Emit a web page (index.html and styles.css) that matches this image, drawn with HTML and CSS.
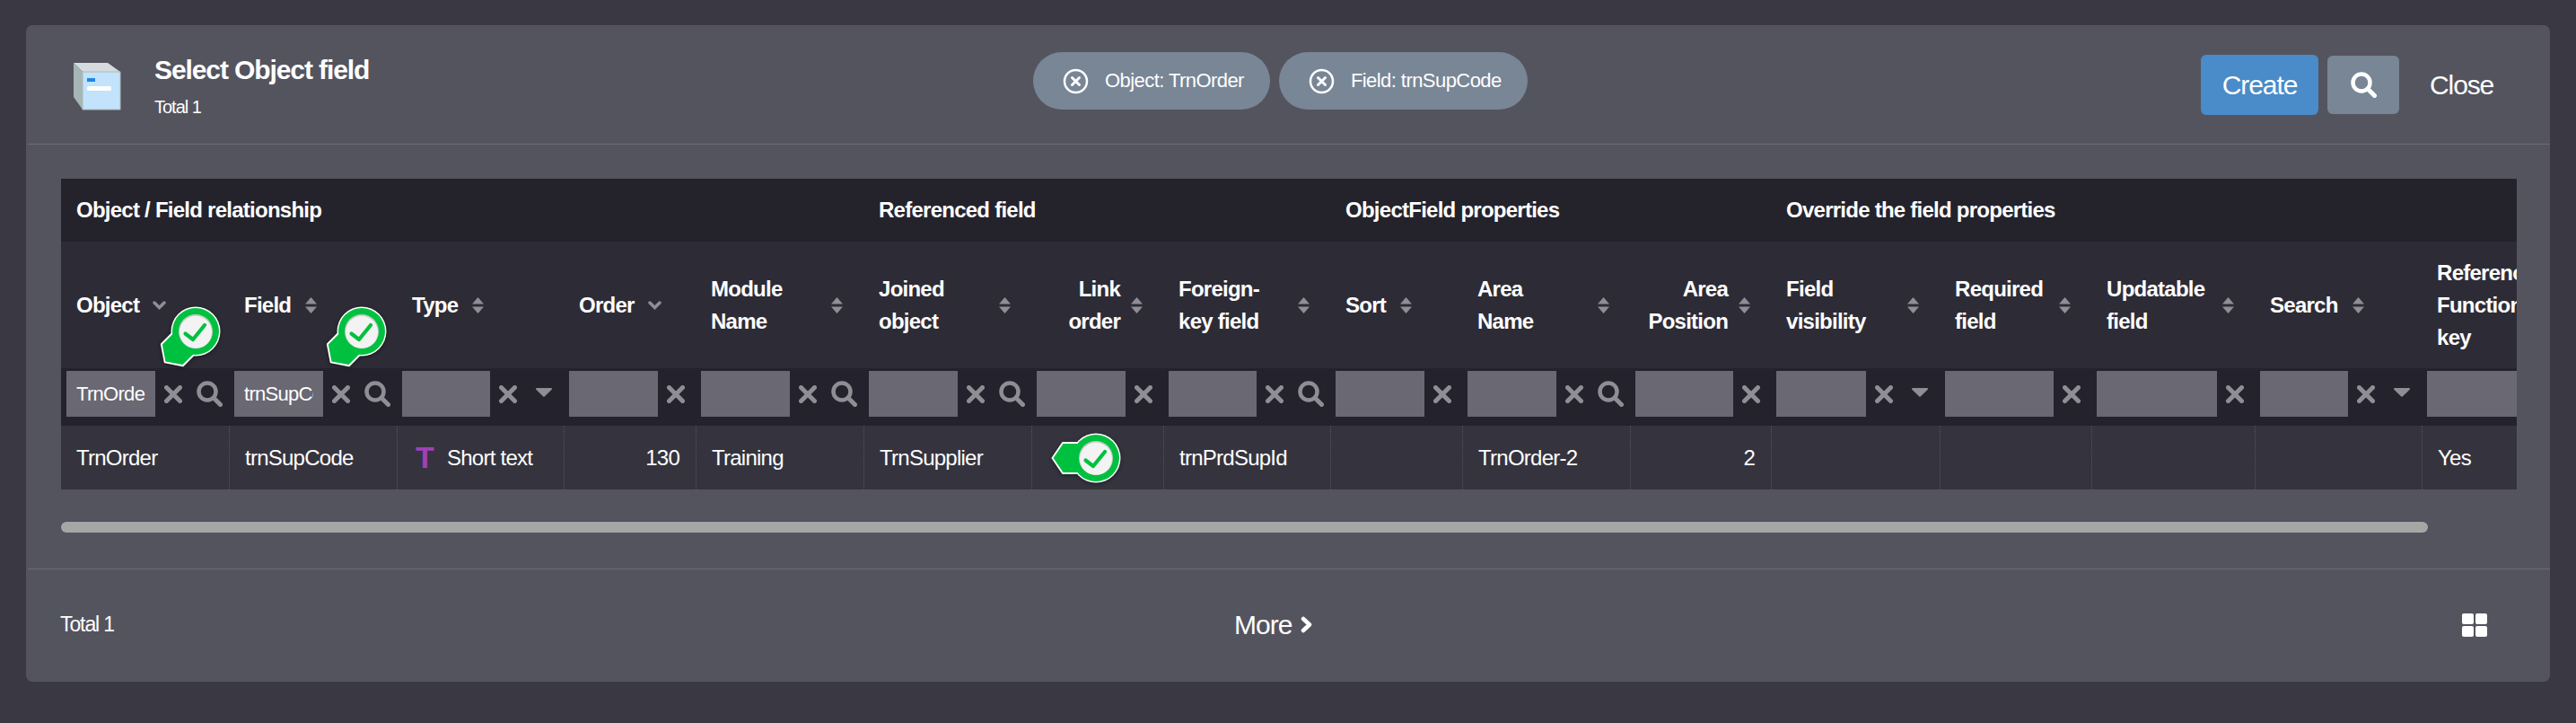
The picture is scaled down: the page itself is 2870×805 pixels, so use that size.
FILE: index.html
```html
<!DOCTYPE html>
<html lang="en">
<head>
<meta charset="UTF-8">
<title>Select Object field</title>
<link rel="stylesheet" href="styles.css">
</head>
<body>
<svg class="defs" width="0" height="0">
    <defs>
        <symbol id="i-sort" viewBox="0 0 13 18">
            <path d="M6.500 0 13 7.500H0z"/>
            <path d="M0 10.500H13L6.500 18z"/>
        </symbol>
        <symbol id="i-chev" viewBox="0 0 15 10">
            <path d="M2 2l5.500 5.500L13 2" fill="none" stroke="currentColor" stroke-width="3.500" stroke-linecap="round"/>
        </symbol>
        <symbol id="i-x" viewBox="0 0 20 20">
            <path d="M2.500 2.500l15 15M17.500 2.500l-15 15" fill="none" stroke="currentColor" stroke-width="5" stroke-linecap="round"/>
        </symbol>
        <symbol id="i-search" viewBox="0 0 29 29">
            <circle cx="12" cy="12" r="9.500" fill="none" stroke="currentColor" stroke-width="4.500"/>
            <path d="M19 19l7.500 7.500" fill="none" stroke="currentColor" stroke-width="5" stroke-linecap="round"/>
        </symbol>
        <symbol id="i-caret" viewBox="0 0 18 10">
            <path d="M1 0H17a1 1 0 0 1 .7 1.700L9.700 9.500a1 1 0 0 1-1.400 0L.3 1.700A1 1 0 0 1 1 0z"/>
        </symbol>
        <!-- marker pointing left, rotated for the header ones -->
        <g id="pin-body">
            <path d="M-48.500 0-37-17H-10V17H-37z" fill="#fff" stroke="#fff" stroke-width="2" stroke-linejoin="round"/>
            <circle r="27.500" fill="#fff"/>
            <path d="M-47.500 0-36.500-16H-10V16H-36.500z" fill="#00c13f"/>
            <circle r="26" fill="#00c13f"/>
        </g>
        <g id="pin-face">
            <circle r="19" fill="#c9c9c9"/>
            <circle r="18" cy="0.800" fill="#f3f3f3"/>
            <path d="M-11.500 2.500-3 9 10-7" fill="none" stroke="#00c13f" stroke-width="4.200" stroke-linecap="round" stroke-linejoin="round"/>
        </g>
    </defs>
</svg>

<div class="panel">
    <header class="panel-head">
        <div class="head-left">
            <svg class="cube" width="54" height="54" viewBox="0 0 54 54">
                <path d="M1 1H39L53 11H11z" fill="#d6dcde"/>
                <path d="M1 1 11 11V53L1 39z" fill="#a6b6b4"/>
                <path d="M11 11H53V53H11z" fill="#c3e2fb" stroke="#a9b9bc" stroke-width="1"/>
                <rect x="16" y="18" width="9" height="4" fill="#1e88e5"/>
                <rect x="16" y="27" width="27" height="5" rx="1.500" fill="#fff"/>
            </svg>
            <div class="head-text">
                <h1>Select Object field</h1>
                <div class="head-total">Total 1</div>
            </div>
        </div>
        <div class="chips">
            <span class="chip">
                <svg class="chip-x" width="29" height="29" viewBox="0 0 29 29">
                    <circle cx="14.500" cy="14.500" r="12.500" fill="none" stroke="#fff" stroke-width="2.500"/>
                    <path d="M10.500 10.500l8 8M18.500 10.500l-8 8" fill="none" stroke="#fff" stroke-width="3" stroke-linecap="round"/>
                </svg>
                Object: TrnOrder
            </span>
            <span class="chip">
                <svg class="chip-x" width="29" height="29" viewBox="0 0 29 29">
                    <circle cx="14.500" cy="14.500" r="12.500" fill="none" stroke="#fff" stroke-width="2.500"/>
                    <path d="M10.500 10.500l8 8M18.500 10.500l-8 8" fill="none" stroke="#fff" stroke-width="3" stroke-linecap="round"/>
                </svg>
                Field: trnSupCode
            </span>
        </div>
        <div class="head-actions">
            <button class="btn btn-create">Create</button>
            <button class="btn btn-search"><svg width="29" height="29"><use href="#i-search"/></svg></button>
            <button class="btn btn-close">Close</button>
        </div>
    </header>

    <div class="panel-body">
        <div class="table-wrap">
            <table class="grid">
                <colgroup>
                    <col class="w187"><col class="w187"><col class="w186"><col class="w147"><col class="w187">
                    <col class="w187"><col class="w147"><col class="w186">
                    <col class="w147"><col class="w187"><col class="w157">
                    <col class="w188"><col class="w169"><col class="w182"><col class="w186"><col class="w190">
                </colgroup>
                <thead>
                    <tr class="row-group">
                        <th colspan="5">Object / Field relationship</th>
                        <th colspan="3">Referenced field</th>
                        <th colspan="3">ObjectField properties</th>
                        <th colspan="5">Override the field properties</th>
                    </tr>
                    <tr class="row-head">
                        <th class="has-pin">
                            <div class="th-in"><span class="th-text">Object</span><svg class="chev" width="15" height="10"><use href="#i-chev"/></svg></div>
                            <svg class="pin pin-a" width="100" height="100" viewBox="-50 -50 100 100"><use href="#pin-body" transform="rotate(-45)"/><use href="#pin-face"/></svg>
                        </th>
                        <th class="has-pin">
                            <div class="th-in"><span class="th-text">Field</span><svg class="sort" width="13" height="18"><use href="#i-sort"/></svg></div>
                            <svg class="pin pin-b" width="100" height="100" viewBox="-50 -50 100 100"><use href="#pin-body" transform="rotate(-45)"/><use href="#pin-face"/></svg>
                        </th>
                        <th><div class="th-in"><span class="th-text">Type</span><svg class="sort" width="13" height="18"><use href="#i-sort"/></svg></div></th>
                        <th><div class="th-in"><span class="th-text">Order</span><svg class="chev" width="15" height="10"><use href="#i-chev"/></svg></div></th>
                        <th><div class="th-in"><span class="th-text">Module Name</span><svg class="sort" width="13" height="18"><use href="#i-sort"/></svg></div></th>
                        <th><div class="th-in"><span class="th-text">Joined object</span><svg class="sort" width="13" height="18"><use href="#i-sort"/></svg></div></th>
                        <th class="num"><div class="th-in"><span class="th-text">Link order</span><svg class="sort" width="13" height="18"><use href="#i-sort"/></svg></div></th>
                        <th><div class="th-in"><span class="th-text">Foreign-key field</span><svg class="sort" width="13" height="18"><use href="#i-sort"/></svg></div></th>
                        <th><div class="th-in"><span class="th-text">Sort</span><svg class="sort" width="13" height="18"><use href="#i-sort"/></svg></div></th>
                        <th><div class="th-in"><span class="th-text">Area Name</span><svg class="sort" width="13" height="18"><use href="#i-sort"/></svg></div></th>
                        <th class="num"><div class="th-in"><span class="th-text">Area Position</span><svg class="sort" width="13" height="18"><use href="#i-sort"/></svg></div></th>
                        <th><div class="th-in"><span class="th-text">Field visibility</span><svg class="sort" width="13" height="18"><use href="#i-sort"/></svg></div></th>
                        <th><div class="th-in"><span class="th-text">Required field</span><svg class="sort" width="13" height="18"><use href="#i-sort"/></svg></div></th>
                        <th><div class="th-in"><span class="th-text">Updatable field</span><svg class="sort" width="13" height="18"><use href="#i-sort"/></svg></div></th>
                        <th><div class="th-in"><span class="th-text">Search</span><svg class="sort" width="13" height="18"><use href="#i-sort"/></svg></div></th>
                        <th><div class="th-in"><span class="th-text">Reference Function key</span><svg class="sort" width="13" height="18"><use href="#i-sort"/></svg></div></th>
                    </tr>
                    <tr class="row-filter">
                        <td><div class="flt"><input value="TrnOrder"><span class="slot"><svg width="20" height="20"><use href="#i-x"/></svg></span><span class="slot"><svg width="29" height="29"><use href="#i-search"/></svg></span></div></td>
                        <td><div class="flt"><input value="trnSupCode"><span class="slot"><svg width="20" height="20"><use href="#i-x"/></svg></span><span class="slot"><svg width="29" height="29"><use href="#i-search"/></svg></span></div></td>
                        <td><div class="flt"><input><span class="slot"><svg width="20" height="20"><use href="#i-x"/></svg></span><span class="slot"><svg class="caret" width="18" height="10"><use href="#i-caret"/></svg></span></div></td>
                        <td><div class="flt"><input><span class="slot"><svg width="20" height="20"><use href="#i-x"/></svg></span></div></td>
                        <td><div class="flt"><input><span class="slot"><svg width="20" height="20"><use href="#i-x"/></svg></span><span class="slot"><svg width="29" height="29"><use href="#i-search"/></svg></span></div></td>
                        <td><div class="flt"><input><span class="slot"><svg width="20" height="20"><use href="#i-x"/></svg></span><span class="slot"><svg width="29" height="29"><use href="#i-search"/></svg></span></div></td>
                        <td><div class="flt"><input><span class="slot"><svg width="20" height="20"><use href="#i-x"/></svg></span></div></td>
                        <td><div class="flt"><input><span class="slot"><svg width="20" height="20"><use href="#i-x"/></svg></span><span class="slot"><svg width="29" height="29"><use href="#i-search"/></svg></span></div></td>
                        <td><div class="flt"><input><span class="slot"><svg width="20" height="20"><use href="#i-x"/></svg></span></div></td>
                        <td><div class="flt"><input><span class="slot"><svg width="20" height="20"><use href="#i-x"/></svg></span><span class="slot"><svg width="29" height="29"><use href="#i-search"/></svg></span></div></td>
                        <td><div class="flt"><input><span class="slot"><svg width="20" height="20"><use href="#i-x"/></svg></span></div></td>
                        <td><div class="flt"><input><span class="slot"><svg width="20" height="20"><use href="#i-x"/></svg></span><span class="slot"><svg class="caret" width="18" height="10"><use href="#i-caret"/></svg></span></div></td>
                        <td><div class="flt"><input><span class="slot"><svg width="20" height="20"><use href="#i-x"/></svg></span></div></td>
                        <td><div class="flt"><input><span class="slot"><svg width="20" height="20"><use href="#i-x"/></svg></span></div></td>
                        <td><div class="flt"><input><span class="slot"><svg width="20" height="20"><use href="#i-x"/></svg></span><span class="slot"><svg class="caret" width="18" height="10"><use href="#i-caret"/></svg></span></div></td>
                        <td><div class="flt"><input><span class="slot"><svg width="20" height="20"><use href="#i-x"/></svg></span><span class="slot"><svg class="caret" width="18" height="10"><use href="#i-caret"/></svg></span></div></td>
                    </tr>
                </thead>
                <tbody>
                    <tr class="row-data">
                        <td>TrnOrder</td>
                        <td>trnSupCode</td>
                        <td><span class="type-t">T</span>Short text</td>
                        <td class="right">130</td>
                        <td>Training</td>
                        <td>TrnSupplier</td>
                        <td class="has-pin"><svg class="pin pin-c" width="100" height="100" viewBox="-50 -50 100 100"><use href="#pin-body"/><use href="#pin-face"/></svg></td>
                        <td>trnPrdSupId</td>
                        <td></td>
                        <td>TrnOrder-2</td>
                        <td class="right">2</td>
                        <td></td>
                        <td></td>
                        <td></td>
                        <td></td>
                        <td>Yes</td>
                    </tr>
                </tbody>
            </table>
        </div>
        <div class="scroll-thumb"></div>
    </div>

    <footer class="panel-foot">
        <div class="foot-total">Total 1</div>
        <div class="more">More
            <svg width="13" height="19" viewBox="0 0 13 19"><path d="M3 3l7 6.500-7 6.500" fill="none" stroke="#fff" stroke-width="4.500" stroke-linecap="round" stroke-linejoin="round"/></svg>
        </div>
        <div class="tiles"><span></span><span></span><span></span><span></span></div>
    </footer>
</div>
</body>
</html>
```

FILE: styles.css
```css
* {
    box-sizing: border-box;
}
html, body {
    margin: 0;
    height: 805px;
    overflow: hidden;
}
body {
    background-color: #3a3842;
    color: #fff;
    font-family: "Liberation Sans", Arial, sans-serif;
    font-size: 24px;
    letter-spacing: -0.75px;
    padding: 28px 0 0 29px;
}
.defs {
    display: block;
    height: 0;
}
.panel {
    width: 2812px;
    height: 731px;
    background-color: #54545f;
    border-radius: 7px;
}

/* header */
.panel-head {
    height: 133px;
    margin-left: 2px;
    border-bottom: 1px solid #6c6c77;
    display: flex;
    align-items: flex-start;
}
.head-left {
    width: 1120px;
    display: flex;
    padding: 41px 0 0 50px;
}
.head-text {
    margin-left: 37px;
    margin-top: -14px;
}
h1 {
    margin: 0;
    font-size: 30px;
    letter-spacing: -1.1px;
    line-height: 46px;
}
.head-total {
    font-size: 20px;
    letter-spacing: -1px;
    line-height: 24px;
    margin-top: 6px;
}
.chips {
    display: flex;
    gap: 10px;
    margin-top: 30px;
}
.chip {
    height: 64px;
    border-radius: 32px;
    background-color: #788696;
    font-size: 22px;
    letter-spacing: -0.56px;
    display: flex;
    align-items: center;
    padding: 0 29px 0 33px;
}
.chip-x {
    margin-right: 18px;
}
.head-actions {
    margin-left: auto;
    padding: 33px 0 0;
    display: flex;
    align-items: center;
    width: 389px;
}
.btn {
    border: none;
    color: #fff;
    font-family: inherit;
    font-size: 30px;
    letter-spacing: -1.1px;
    border-radius: 6px;
    padding: 0;
    display: flex;
    align-items: center;
    justify-content: center;
}
.btn-create {
    width: 131px;
    height: 67px;
    background-color: #4a8bc9;
}
.btn-search {
    width: 80px;
    height: 65px;
    margin-left: 10px;
    background-color: #788696;
}
.btn-close {
    background: none;
    margin-left: 34px;
}

/* table */
.panel-body {
    padding: 38px 0 0 39px;
}
.table-wrap {
    width: 2736px;
    height: 346px;
    overflow: hidden;
}
.grid {
    table-layout: fixed;
    width: 2820px;
    border-collapse: separate;
    border-spacing: 0;
}
.w147 { width: 147px; }
.w157 { width: 157px; }
.w169 { width: 169px; }
.w182 { width: 182px; }
.w186 { width: 186px; }
.w187 { width: 187px; }
.w188 { width: 188px; }
.w190 { width: 190px; }

.row-group th {
    height: 70px;
    padding: 0 17px;
    text-align: left;
    background-color: #24232c;
}
.row-head th {
    height: 141px;
    padding: 0 23px 0 17px;
    text-align: left;
    background-color: #2d2c36;
    line-height: 36px;
}
.th-in {
    display: flex;
    align-items: center;
    gap: 16px;
}
.th-text {
    min-width: 0;
}
.num .th-text {
    text-align: right;
    margin-right: -4px;
}
.sort, .chev {
    flex: none;
    fill: #8f8e95;
    color: #8f8e95;
}
.chev {
    margin-left: -1px;
}

.row-filter td {
    height: 64px;
    padding: 3px 0 10px 6px;
    background-color: #24232d;
}
.flt {
    display: flex;
    align-items: center;
    padding-right: 2px;
}
.flt input {
    flex: 1;
    min-width: 0;
    height: 51px;
    border: none;
    border-radius: 0;
    padding: 0 11px;
    background-color: #696873;
    color: #fff;
    font-family: inherit;
    font-size: 22px;
    letter-spacing: -0.7px;
}
.slot {
    flex: none;
    width: 40px;
    height: 51px;
    display: flex;
    align-items: center;
    justify-content: center;
    color: #8f8e95;
    fill: #8f8e95;
}
.caret {
    margin-top: -4px;
}

.row-data td {
    height: 71px;
    padding: 0 17px;
    background-color: #35343e;
    border-left: 1px dotted #55545e;
    white-space: nowrap;
}
.row-data td:first-child {
    border-left: none;
}
.row-data td.right {
    text-align: right;
    padding-right: 18px;
}
.type-t {
    display: inline-block;
    width: 35px;
    margin-left: 3px;
    color: #a040b8;
    font-size: 34px;
    font-weight: 700;
    line-height: 24px;
    letter-spacing: 0;
    vertical-align: -3px;
}

/* green link markers */
.has-pin {
    position: relative;
}
.pin {
    position: absolute;
    overflow: visible;
    filter: drop-shadow(0 1px 2px rgba(0, 0, 0, 0.45));
}
.pin-a { left: 100px; top: 50px; }
.pin-b { left: 98px; top: 50px; }
.pin-c { left: 21px; top: -14px; }

.scroll-thumb {
    width: 2637px;
    height: 12px;
    margin-top: 36px;
    border-radius: 6px;
    background-color: #a6a6a6;
}

/* footer */
.panel-foot {
    margin: 40px 0 0 2px;
    height: 124px;
    border-top: 1px solid #6c6c77;
    display: flex;
    align-items: center;
}
.foot-total {
    margin-left: 36px;
    width: 1308px;
    font-size: 23px;
    letter-spacing: -1.1px;
}
.more {
    font-size: 30px;
    letter-spacing: -1px;
    display: flex;
    align-items: center;
    gap: 10px;
}
.tiles {
    margin-left: auto;
    margin-right: 70px;
    display: grid;
    grid-template-columns: 13px 13px;
    grid-auto-rows: 12px;
    gap: 2px;
}
.tiles span {
    background-color: #fff;
    border-radius: 2px;
}
```
